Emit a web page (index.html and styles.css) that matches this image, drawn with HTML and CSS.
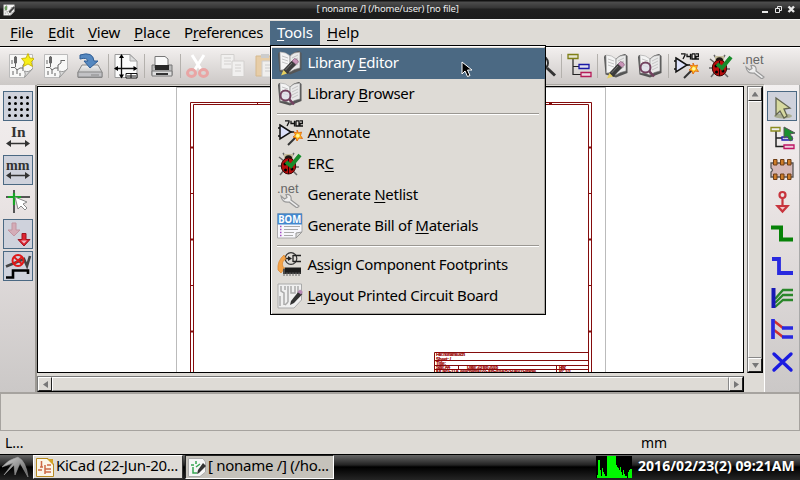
FILE: index.html
```
<!DOCTYPE html>
<html lang="en">
<head>
<meta charset="utf-8">
<title>[ noname /] (/home/user) [no file]</title>
<link rel="stylesheet" href="styles.css">
</head>
<body>
<svg class="defs" width="0" height="0">
  <defs>
    <linearGradient id="wing" x1="0" x2="1" y1="0" y2="1"><stop offset="0" stop-color="#d8d8d8"/><stop offset="1" stop-color="#555"/></linearGradient>
    <linearGradient id="disk" x1="0" x2="0" y1="0" y2="1"><stop offset="0" stop-color="#f2f2f2"/><stop offset="1" stop-color="#aaa"/></linearGradient>
    <symbol id="sheet" viewBox="0 0 26 26">
      <path d="M1.500 1.500H24.500V16L16 24.500H1.500Z" fill="#f8f8f7" stroke="#bbb"/>
      <path d="M16.500 24.500Q18 21 16.500 18Q21 20 24.500 15.500Z" fill="#ddd" stroke="#999"/>
      <path d="M3 8H5M3 10H5M7.500 3V11M6.500 4V10H8.500V4ZM7.500 11V14M3 14.500H7L9 17V21M9 17L12 15H15M15 12V18M15 12L18 10V7M18 7.500H22M12 20V23M5 18V22" fill="none" stroke="#666"/>
    </symbol>
    <symbol id="book" viewBox="0 0 26 26">
      <path d="M1 4L2.500 21.500L13 24.500L24.500 20V3L22 1Q16 2 13 6Q8 2 2 2Z" fill="#555"/>
      <path d="M3 2Q9 2 13 6V22Q8 19 3.500 20Z" fill="#f4f4f4" stroke="#aaa" stroke-width=".6"/>
      <path d="M13 6Q16 2 23 2V18Q17 19 13 22Z" fill="#e9e9e9" stroke="#777" stroke-width=".6"/>
      <path d="M5 6L11 8M5 9L11 11M5 12L11 14M15 8L21 5M15 11L21 8M15 14L21 11M15 17L21 14" stroke="#c4c4c4"/>
    </symbol>
    <symbol id="libedit" viewBox="0 0 26 26">
      <use href="#book" width="26" height="26"/>
      <path d="M15 11L19 14.500L10 23.500L6.500 20Z" fill="#3c3c3c" stroke="#222" stroke-width=".6"/>
      <path d="M15 11L17.500 8.500Q21 9 21.500 12L19 14.500Z" fill="#c995b8" stroke="#75526b" stroke-width=".6"/>
      <path d="M6.500 20L10 23.500L4 25.500Z" fill="#e6d060"/><path d="M15 13L8.500 20" stroke="#777"/>
    </symbol>
    <symbol id="libview" viewBox="0 0 26 26">
      <use href="#book" width="26" height="26"/>
      <circle cx="8.500" cy="14.500" r="5" fill="#dcdce8" fill-opacity=".75" stroke="#72415f" stroke-width="2"/>
      <path d="M12 18L17 23.500" stroke="#72415f" stroke-width="2.600"/>
    </symbol>
    <symbol id="annotate" viewBox="0 0 26 26">
      <path d="M8 .8H12V2L10 6M14 .8V3.500H17.500M17.500 .8V6.500M19 .8H22V6H19V.8M23 .8H25.500V3.500H23V6H26" fill="none" stroke="#111" stroke-width="1.300"/>
      <path d="M1 8H3M1 16H3M14 12H17" stroke="#111" stroke-width="1.500"/>
      <path d="M3 5L14 12L3 19Z" fill="#dde2fb" stroke="#111" stroke-width="1.500"/>
      <path d="M11 25L19 17" stroke="#333" stroke-width="2"/>
      <path d="M20 10L21.500 13L24.500 12L23.500 15.500L25.500 18.500L22 18L20 21L19 18L16 17L18.500 15L17 12L20 13Z" fill="#ffc21c" stroke="#e05b00" stroke-width=".8"/>
      <circle cx="20.800" cy="15.800" r="1.800" fill="#fff7a0"/>
    </symbol>
    <symbol id="erc" viewBox="0 0 26 26">
      <path d="M7 10L2 6M6 15H1M7 19L3 24M17 10L21 5M18 16H22M16 20L20 24M8 5L6 2M15 5L17 2" stroke="#666" stroke-width="1.500"/>
      <path d="M7 3H16V8H7Z" fill="#c5bd9e"/><circle cx="11.500" cy="8" r="3.800" fill="#1d1712"/>
      <ellipse cx="11.500" cy="15" rx="7.200" ry="8" fill="#b90d0d" stroke="#3b0505"/>
      <path d="M11.500 8V23" stroke="#270000"/><circle cx="8" cy="13" r="1.500"/><circle cx="8.500" cy="19" r="1.500"/><circle cx="15" cy="18" r="1.500"/>
      <path d="M9 11L14 15L23 4" fill="none" stroke="#178c2b" stroke-width="4"/>
    </symbol>
    <symbol id="netlist" viewBox="0 0 26 26">
      <text x="0" y="11" class="net-word" textLength="21.500" lengthAdjust="spacingAndGlyphs">.net</text>
      <path d="M4 14L7.500 17L10 15.500L9 12.500Q15 12 14 18L22 24L20 26L12 20Q5 21 4 14Z" fill="#eee" stroke="#999" stroke-width="1.200"/>
    </symbol>
    <symbol id="bom" viewBox="0 0 26 26">
      <path d="M.5 .5H25V19L19 25H.5Z" fill="#f7f7fc" stroke="#aaa"/><path d="M19 25V20L25 19Z" fill="#ddd" stroke="#999"/>
      <path d="M.5 .5H25V11.500H.5Z" fill="#4388ce"/>
      <text x="1.200" y="10" class="bom-word" textLength="23" lengthAdjust="spacingAndGlyphs">BOM</text>
      <path d="M3 13.500H4.500M3 16.500H4.500M3 19.500H4.500M3 22.500H4.500" stroke="#a34dc3" stroke-width="1.300"/>
      <path d="M7 13.500H23M7 16.500H21M7 19.500H17M7 22.500H16" stroke="#aaa"/>
    </symbol>
    <symbol id="assign" viewBox="0 0 26 26">
      <circle cx="14" cy="6.500" r="5.800" fill="none" stroke="#333" stroke-width="1.200"/>
      <path d="M6 6.500H11M16 3V10M16 3.500H24M16 9.500H24" stroke="#222" stroke-width="1.300"/><path d="M11 4V9L15 6.500Z" fill="#222"/>
      <path d="M7 3Q0 9 1 18L4 21L8 16L6 15Q4 9 9 7Z" fill="#f4a348" stroke="#d8842d" stroke-width=".7"/>
      <path d="M6 17H24V22H6Z" fill="#333"/><path d="M7 16V24M10 16V24M13 16V24M16 16V24M19 16V24M22 16V24" stroke="#666"/>
      <path d="M8 15.500H24V20.500H8Z" fill="#1c1c1c"/>
    </symbol>
    <symbol id="pcb" viewBox="0 0 26 26">
      <path d="M1 1H24.500V17L17 25H1Z" fill="#f0f0f0" stroke="#aaa"/>
      <path d="M4 3V8L7 10V22M8 3V7M11 3V19M14 3V10H18V3M21 3V12M3 13V23M11 19L8 22" fill="none" stroke="#aaa" stroke-width="1.500"/>
      <path d="M22 8L25.500 11L17 20L13 22L14 18Z" fill="#333"/><path d="M20.500 9L23 6.500L26 9L24 11.500Z" fill="#b78ab5"/>
    </symbol>
    <symbol id="hierarchy" viewBox="0 0 26 26">
      <path d="M6 6V21.500H14M6 13.500H12" fill="none" stroke="#222" stroke-width="1.200"/>
      <path d="M1 1.500H11V5.500H1Z" fill="#e4e4d3" stroke="#7f7f16" stroke-width="1.300"/>
      <path d="M12 11.500H22V15.500H12Z" fill="#dcdcec" stroke="#1717a6" stroke-width="1.300"/>
      <path d="M14 19.500H24V23.500H14Z" fill="#ecd9e2" stroke="#b51c58" stroke-width="1.300"/>
    </symbol>
    <symbol id="pointer" viewBox="0 0 12 17"><path d="M1 1V13L4 10L6.500 15.500L9 14.500L6.500 9H11Z"/></symbol>
  </defs>
</svg>

<div class="window">
  <header class="titlebar">
    <svg class="title-icon" viewBox="0 0 26 26"><use href="#sheet"/><path d="M12 17L23 5L26 8L15 20Z" fill="#444"/><path d="M4 5H9V13H4Z" fill="#6b9d5b"/></svg>
    <span class="title-text">[ noname /] (/home/user) [no file]</span>
    <svg class="title-buttons" width="34" height="9" viewBox="0 0 34 9" fill="none" stroke="#e6e6e6">
      <path d="M1 7H7" stroke-width="2"/><path d="M16.500 3V1.500H20.500V5.500H19M14.500 3.500H18.500V7.500H14.500Z"/><path d="M27.500 1.500L33 7M33 1.500L27.500 7" stroke-width="2.400"/>
    </svg>
  </header>

  <nav class="menubar">
    <span class="m-file"><u>F</u>ile</span><span class="m-edit"><u>E</u>dit</span><span class="m-view"><u>V</u>iew</span><span class="m-place"><u>P</u>lace</span><span class="m-prefs">P<u>r</u>eferences</span>
    <div class="m-tools active"><u>T</u>ools
      <div class="dropdown">
        <div class="item selected"><svg><use href="#libedit"/></svg><span>Library <u>E</u>ditor</span></div>
        <div class="item"><svg><use href="#libview"/></svg><span>Library <u>B</u>rowser</span></div>
        <hr>
        <div class="item"><svg><use href="#annotate"/></svg><span><u>A</u>nnotate</span></div>
        <div class="item"><svg><use href="#erc"/></svg><span>ER<u>C</u></span></div>
        <div class="item"><svg><use href="#netlist"/></svg><span>Generate <u>N</u>etlist</span></div>
        <div class="item"><svg><use href="#bom"/></svg><span>Generate Bill of <u>M</u>aterials</span></div>
        <hr>
        <div class="item"><svg><use href="#assign"/></svg><span class="tight">A<u>s</u>sign Component Footprints</span></div>
        <div class="item"><svg><use href="#pcb"/></svg><span><u>L</u>ayout Printed Circuit Board</span></div>
        <svg class="cursor" fill="#000" stroke="#fff" stroke-width="1"><use href="#pointer"/></svg>
      </div>
    </div>
    <span class="m-help"><u>H</u>elp</span>
  </nav>

  <div class="toolbar">
    <div class="group">
      <svg viewBox="0 0 26 26"><use href="#sheet"/><path d="M20 .5L21.800 5L26.500 5.500L23 9L24.500 13.500L20 11L15.500 13.500L16.500 9L13.500 5.500L18 5Z" fill="#f6ee18" stroke="#c0a900" stroke-width=".8"/></svg>
      <svg viewBox="0 0 26 26"><use href="#sheet"/></svg>
      <svg viewBox="0 0 26 26"><path d="M5 12H21L25 19V24.500H1V19Z" fill="url(#disk)" stroke="#888"/><path d="M1 19H25V24H1Z" fill="#c2c2c5" stroke="#888"/><path d="M3 2Q16 -2 17 8H21L13 15L7 8H11Q10 4 3 6Z" fill="#5588c0" stroke="#315f96"/><path d="M14 22H22" stroke="#888"/></svg>
    </div>
    <i></i>
    <div class="group"><svg viewBox="0 0 26 26"><path d="M2 1.500H17L24 8V24.500H2Z" fill="#fbfbfb" stroke="#999"/><path d="M17 2V8H24Z" fill="#ddd" stroke="#aaa"/><path d="M8.500 3V24M2 15.500H23" stroke="#111" stroke-width="1.300"/><path d="M8.500 1L6 5H11ZM8.500 25.500L6 21.500H11ZM1 15.500L5 13V18ZM24.500 15.500L20.500 13V18Z"/><path d="M13 20.500H24V25H13ZM14 23H23M18 20V25" fill="#fff" stroke="#111"/></svg></div>
    <i></i>
    <div class="group"><svg viewBox="0 0 26 26"><path d="M6 3.500H16L19 6V15H6Z" fill="#fafafa" stroke="#777"/><path d="M3 12H6V15H19V12H23V22H3Z" fill="#bbb" stroke="#777"/><path d="M6 12H20V17H6Z" fill="#292929"/><path d="M3 18H23V23H3Z" fill="#ddd" stroke="#777"/><path d="M7 21H19" stroke="#333" stroke-width="2"/></svg></div>
    <i></i>
    <div class="group">
      <svg viewBox="0 0 26 26"><path d="M7 2L17 18M19 2L9 18" stroke="#fff" stroke-width="3"/><ellipse cx="6.500" cy="20" rx="4" ry="3.500" fill="none" stroke="#e9a5a4" stroke-width="3"/><ellipse cx="18.500" cy="20" rx="4" ry="3.500" fill="none" stroke="#e9a5a4" stroke-width="3"/></svg>
      <svg viewBox="0 0 26 26" fill="#f1f0ef" stroke="#d2d0ce"><path d="M1 1.500H14V16H1Z"/><path d="M4 5H11M4 8H11M4 11H11"/><path d="M12 8H24V23.500H12Z"/><path d="M15 12H21M15 15H21M15 18H21"/></svg>
      <svg viewBox="0 0 26 26"><path d="M2 3H20V23H2Z" fill="#e7cda7" stroke="#d6b98e"/><path d="M7 1H15V5H7Z" fill="#ccc"/><path d="M8 8H24V24H8Z" fill="#f0efed" stroke="#ccc"/><path d="M11 12H21M11 15H21M11 18H19" stroke="#ccc"/></svg>
    </div>
    <div class="group resume"><svg viewBox="0 0 26 26"><circle cx="10" cy="10" r="7" fill="#e7e7e7" stroke="#333" stroke-width="2"/><path d="M16 15L24 22.500" stroke="#333" stroke-width="3"/></svg></div>
    <i></i>
    <div class="group"><svg><use href="#hierarchy"/></svg></div>
    <i></i>
    <div class="group"><svg><use href="#libedit"/></svg><svg><use href="#libview"/></svg></div>
    <i></i>
    <div class="group"><svg><use href="#annotate"/></svg><svg><use href="#erc"/></svg><svg><use href="#netlist"/></svg></div>
  </div>

  <main class="work">
    <aside class="side left">
      <b class="on"><svg viewBox="0 0 28 28"><path d="M5.500 5.500H24M5.500 11.500H24M5.500 17.500H24M5.500 23.500H24" stroke="#000" stroke-width="3" stroke-linecap="round" stroke-dasharray="0 6"/></svg></b>
      <b><svg viewBox="0 0 28 28"><text x="7" y="13" class="unit" textLength="14.500" lengthAdjust="spacingAndGlyphs">In</text><path d="M5 19.500H23" stroke="#333" stroke-width="1.500"/><path d="M2 19.500L7 16V23ZM26 19.500L21 16V23Z" fill="#333"/></svg></b>
      <b class="on"><svg viewBox="0 0 28 28"><text x="2" y="14" class="unit" textLength="23.500" lengthAdjust="spacingAndGlyphs">mm</text><path d="M5 19.500H23" stroke="#333" stroke-width="1.500"/><path d="M2 19.500L7 16V23ZM26 19.500L21 16V23Z" fill="#333"/></svg></b>
      <b><svg viewBox="0 0 28 28"><path d="M10 2V25M2 9H26" stroke="#555" stroke-width="2"/><path d="M10 5V17M4 9H17" stroke="#18a526" stroke-width="2.200"/><path d="M11 9L14 21L17 18L21 22L23 20L19 16L23 14Z" fill="#fff" stroke="#888"/></svg></b>
      <b class="on"><svg viewBox="0 0 28 28"><path d="M8 3H12V10H16L10 16L4 10H8Z" fill="#d4acb7" stroke="#c195a2"/><path d="M18 13.500H22V19.500H26L20 26L14 19.500H18Z" fill="#df2431" stroke="#9d1521"/><path d="M17 20.500H23L20 23.500Z" fill="#f0b6c0"/></svg></b>
      <b class="on"><svg viewBox="0 0 28 28"><path d="M2 14.500L13 10L20 7L23 14L26 4" fill="none" stroke="#444" stroke-width="2.600"/><circle cx="14" cy="8.500" r="5.500" fill="none" stroke="#df1818" stroke-width="2"/><path d="M10 5L18 12M10 12L18 5" stroke="#df1818" stroke-width="1.800"/><path d="M2 25.500H9V18.500H24V22" fill="none" stroke="#000" stroke-width="2.600"/></svg></b>
    </aside>

    <section class="viewport">
      <svg class="canvas" width="707" height="287" viewBox="37 86 707 287">
        <path d="M176.500 87V373M605.500 87V373M176.500 87.500H605.500" stroke="#bbb" fill="none"/>
        <g fill="none" stroke="#840c0c">
          <path d="M190.500 373V102.500H591.500V373M193.500 373V104.500H588.500V373"/>
          <path d="M190 193.500H194M190 285.500H194M588 193.500H592M588 285.500H592M257.500 102V105M324.500 102V105M391.500 102V105M457.500 102V105M524.500 102V105"/>
          <path d="M190 147.500H194M190 239.500H194M190 331.500H194M588 147.500H592M588 239.500H592M588 331.500H592M549 103.500H552" stroke-width="2"/>
          <path d="M434.500 373V352.500H588M434 360.500H588M434 365.500H588M434 369.500H588M458.500 365V369M556.500 365V373"/>
        </g>
        <g class="tiny">
          <text x="436" y="356.300" textLength="29">File: noname.sch</text><text x="436" y="361" textLength="15">Sheet: /</text><text x="436" y="365" textLength="10">Title:</text>
          <text x="436" y="369.300" textLength="14">Size: A4</text><text x="467" y="369.300" textLength="31">Date: 23 feb 2016</text><text x="559" y="369.300" textLength="7">Rev:</text>
          <text x="436" y="373.300" textLength="100">KiCad E.D.A. eeschema (22-Jun-2014 BZR 4027)-stable</text><text x="559" y="373.300" textLength="12">Id: 1/1</text>
        </g>
        <rect x="37.500" y="86.500" width="706" height="286" fill="none" stroke="#000"/>
      </svg>
      <div class="vscroll"><span class="arrow up"></span><span class="thumb"></span><span class="arrow down"></span></div>
      <div class="hscroll"><span class="arrow back"></span><span class="thumb"></span><span class="arrow forward"></span></div>
    </section>

    <aside class="side right">
      <b class="on"><svg viewBox="0 0 28 28"><ellipse cx="15" cy="24" rx="9" ry="2.500" fill="#a9ad91"/><path d="M8 6V23L12 19L16 26L19 24L16 17L22 16Z" fill="#d6d99f" stroke="#62644f" stroke-width="1.300"/></svg></b>
      <b><svg viewBox="0 0 28 28"><path d="M8 7V22.500H16M8 14H14" fill="none" stroke="#222" stroke-width="1.500"/><path d="M3 3.500H12V7H3Z" fill="#eee" stroke="#8c8c20" stroke-width="1.300"/><path d="M14 13H24V16H14Z" fill="#ccd" stroke="#2020b0" stroke-width="1.300"/><path d="M16 21H26V24.500H16Z" fill="#ecd" stroke="#bd1463" stroke-width="1.300"/><path d="M16 3V14L19 12L22 17L25 15L22 10L27 9Z" fill="#1a9030" stroke="#555"/></svg></b>
      <b><svg viewBox="0 0 28 28"><path d="M3 7H25V21H3V16Q6 14 3 12Z" fill="#d5b8b7" stroke="#555" stroke-width="1.300"/><path d="M5.500 3.500H9V9H5.500ZM12.500 3.500H16V9H12.500ZM19.500 3.500H23V9H19.500ZM5.500 18H9V23.500H5.500ZM12.500 18H16V23.500H12.500ZM19.500 18H23V23.500H19.500Z" fill="#cd7c28" stroke="#6f3d14"/></svg></b>
      <b><svg viewBox="0 0 28 28" stroke="#c8343d" stroke-width="2.200" fill="none"><circle cx="14.500" cy="7" r="3"/><path d="M14.500 10V18M9.500 18H19.500L14.500 23.500Z" fill="#f3c6ca"/></svg></b>
      <b><svg viewBox="0 0 28 28"><path d="M3 7.500H13V19.500H25" fill="none" stroke="#078207" stroke-width="4"/></svg></b>
      <b><svg viewBox="0 0 28 28"><path d="M4 7H11V21H25" fill="none" stroke="#2929df" stroke-width="3.800"/></svg></b>
      <b><svg viewBox="0 0 28 28"><path d="M7 15L15 6H25M7 19L15 11H25M7 23L15 16H25" fill="none" stroke="#2a872a" stroke-width="2.300"/><path d="M5.500 4V24" stroke="#1818b5" stroke-width="4"/></svg></b>
      <b><svg viewBox="0 0 28 28"><path d="M6 5L15 12M6 14L15 21" stroke="#cf3131" stroke-width="2.600"/><path d="M14 12H25M14 21H25M5 3V23" stroke="#2929df" stroke-width="3.700"/></svg></b>
      <b><svg viewBox="0 0 28 28"><path d="M6 6L23 22M23 6L6 22" stroke="#1a1ae0" stroke-width="3.400" stroke-linecap="round"/></svg></b>
    </aside>
  </main>

  <div class="messages"></div>
  <footer class="status"><span class="hint">L...</span><span class="units">mm</span></footer>
</div>

<div class="taskbar">
  <svg class="swallow" viewBox="0 0 33 26"><path d="M2 13Q9 5 18 3Q26 7 28 23L20 9L15 21L14 11L4 21L13 9Z" fill="url(#wing)" stroke="#999" stroke-width=".6"/></svg>
  <div class="task"><svg viewBox="0 0 18 19"><path d="M.5 .5H12L17.500 6V18.500H.5Z" fill="#fbf6e8" stroke="#b68a21"/><path d="M11 1H17V7Z" fill="#d2a125"/><path d="M5.500 3V9M2 12H6M9 7V16M9 11H15M9 14H15M4 9H7M11 7H15" stroke="#cd6a46" stroke-width="1.500"/></svg><span>KiCad (22-Jun-20...</span></div>
  <div class="task current"><svg viewBox="0 0 18 19"><path d="M.5 .5H15L17.500 4V14L12 18.500H.5Z" fill="#f6f6f6" stroke="#aaa"/><path d="M3 7H6M8 3V6M5 9V15H9M8 9L12 6" fill="none" stroke="#39a653" stroke-width="1.500"/><path d="M15 5L18 8L11 15L9 16L10 12Z" fill="#333"/></svg><span>[ noname /] (/ho...</span></div>
  <svg class="cpu" width="36" height="22" viewBox="0 0 36 22" shape-rendering="crispEdges"><path d="M0 0H36V22H0Z"/><path d="M1 22V19H2V4H4V14H5V20H6V12H7V16H8V18H9V20H11V0H20V9H21V11H22V12H23V14H24V11H25V16H26V19H27V14H28V18H29V20H31V22H32V16H33V14H34V13H36V22Z" fill="#00f800"/></svg>
  <span class="clock">2016/02/23(2) 09:21AM</span>
</div>
</body>
</html>
```
FILE: styles.css
```
* { box-sizing: border-box; }
body {
  margin: 0;
  width: 800px;
  height: 480px;
  overflow: hidden;
  background: #dedbd6;
  color: #000;
  font: 15px/1 "Noto Sans", "Open Sans", sans-serif;
}
svg { display: block; flex: none; }
.defs { height: 0; overflow: hidden; }
u { text-decoration: underline; text-decoration-thickness: 1px; text-underline-offset: 2px; text-decoration-skip-ink: none; }
.window { height: 454px; display: flex; flex-direction: column; }

.titlebar {
  height: 19px;
  display: grid;
  grid-template-columns: 38px 1fr 38px;
  align-items: center;
  background: linear-gradient(#111 0 1px, #4d4d4d 2px, #353535 8px, #202020 9px, #1c1c1c);
  color: #eee;
}
.title-icon { width: 12px; height: 12px; margin-left: 3px; }
.title-text { font-size: 9.5px; letter-spacing: -.2px; text-align: center; padding: 0 25px 1px 0; }
.title-buttons { margin-left: -1px; }

.menubar { height: 28px; display: flex; border-top: 1px solid #f5f5f4; border-bottom: 1px solid #000; padding: 1px 0 0 3px; letter-spacing: -.15px; }
.menubar > * { height: 25px; line-height: 22px; padding-left: 7px; white-space: nowrap; }
.m-file { width: 38px; }
.m-edit { width: 40px; }
.m-view { width: 46px; }
.m-place { width: 50px; }
.m-prefs { width: 93px; letter-spacing: -.42px; }
.m-tools { width: 50px; position: relative; }
.active { background: #4b6983; color: #fff; }

.dropdown {
  position: absolute;
  z-index: 2;
  left: 0;
  top: 24px;
  width: 276px;
  height: 270px;
  padding: 2px 0 2px 1px;
  background: #dedbd6;
  color: #000;
  border: 1px solid #000;
  box-shadow: inset 1px 1px #fff, inset -1px -1px #aaa7a2;
  letter-spacing: -.28px;
}
.item { height: 31px; display: flex; align-items: center; padding: 0 0 2px 5px; line-height: 29px; }
.item svg { width: 26px; height: 26px; margin-right: 4.5px; }
.item span { height: 29px; }
.item .tight { letter-spacing: -.36px; }
.item.selected { background: #4b6983; color: #fff; }
.dropdown hr { height: 2px; margin: 3px 6px 3px 5px; border: 0; border-top: 1px solid #9a9792; border-bottom: 1px solid #fff; }
.dropdown .cursor { position: absolute; left: 190px; top: 15px; width: 12px; height: 17px; }

.toolbar { height: 38px; display: flex; align-items: center; padding: 0 0 1px 4px; background: linear-gradient(#f2efee, #ccc8c6); border-top: 1px solid #fff; }
.group { display: flex; }
.group svg { width: 26px; height: 26px; margin: 0 4.25px; }
.toolbar i { width: 1px; height: 24px; margin: 0 .25px; background: #b4b1ad; }
.resume { margin-left: 242px; }

.work { height: 307px; display: flex; }
.side { width: 37px; display: flex; flex-direction: column; gap: 2px; padding: 6px 0 0 3px; background: linear-gradient(#f2efef, #ebe5e5 35%, #cbc8c7); border-right: 2px solid #9c9994; }
.side b { width: 30px; height: 30px; padding: 1px; }
.side b.on { background: #cfd2dc; border: 1px solid #4b6983; padding: 0; }
.side svg { width: 28px; height: 28px; }
.right { width: 36px; border-left: 1px solid #fff; border-right: 1px solid #aaa; padding-left: 2px; }
.unit { font: bold 14px "Liberation Serif", serif; fill: #333; }
.net-word { font: 13px "Liberation Sans", sans-serif; letter-spacing: 0; fill: #666; }
.bom-word { font: bold 11px "Noto Sans", sans-serif; letter-spacing: 0; fill: #fff; }
.tiny { font: bold 4.6px "Liberation Sans", sans-serif; fill: #900; stroke: #900; stroke-width: .2px; }

.viewport { width: 727px; padding-top: 1px; border-top: 1px solid #aaa7a2; margin-top: -1px; display: grid; grid-template-columns: 707px 16px; grid-template-rows: 287px 16px; column-gap: 3px; row-gap: 3px; align-content: start; }
.canvas { background: #fff; }
.vscroll, .hscroll { display: flex; border: 1px solid #777; border-right-color: #000; border-bottom-color: #000; background: #c5c2bd; }
.vscroll { flex-direction: column; }
.thumb { flex: 1; background: #dedbd6; border: 1px solid #fff; border-right-color: #888; border-bottom-color: #888; }
.arrow { width: 14px; height: 14px; display: grid; place-items: center; background: #dedbd6; border: 1px solid #fff; border-right-color: #222; border-bottom-color: #222; }
.arrow::before { content: ""; width: 7px; height: 5px; background: #777; clip-path: polygon(50% 0, 100% 100%, 0 100%); }
.down::before { transform: rotate(180deg); }
.back::before { transform: rotate(-90deg); }
.forward::before { transform: rotate(90deg); }

.messages { height: 39px; border: 1px solid #a6a39f; border-top-width: 2px; }
.status { height: 23px; display: flex; align-items: center; font-size: 14px; padding-top: 1px; }
.hint { width: 641px; padding-left: 5px; }

.taskbar { height: 26px; display: flex; align-items: center; background: linear-gradient(#000 0 1px, #666 1px, #222 11px, #000 13px, #252525); color: #fff; }
.swallow { width: 33px; height: 26px; }
.task { width: 150px; height: 24px; display: flex; align-items: center; margin-right: 2px; padding-left: 2px; background: #dedbd6; border: 1px solid #fff; border-right-color: #333; border-bottom-color: #333; color: #000; white-space: nowrap; letter-spacing: -.28px; }
.task svg { width: 18px; height: 19px; margin-right: 2px; }
.task span { padding-bottom: 3px; }
.task.current { background: #c5c2bb; border-color: #222 #fff #fff #222; width: 149px; }
.cpu { margin-left: 260px; }
.clock { margin-left: 6px; padding-bottom: 2px; font-size: 14px; font-weight: 700; letter-spacing: .05px; white-space: nowrap; }
```
